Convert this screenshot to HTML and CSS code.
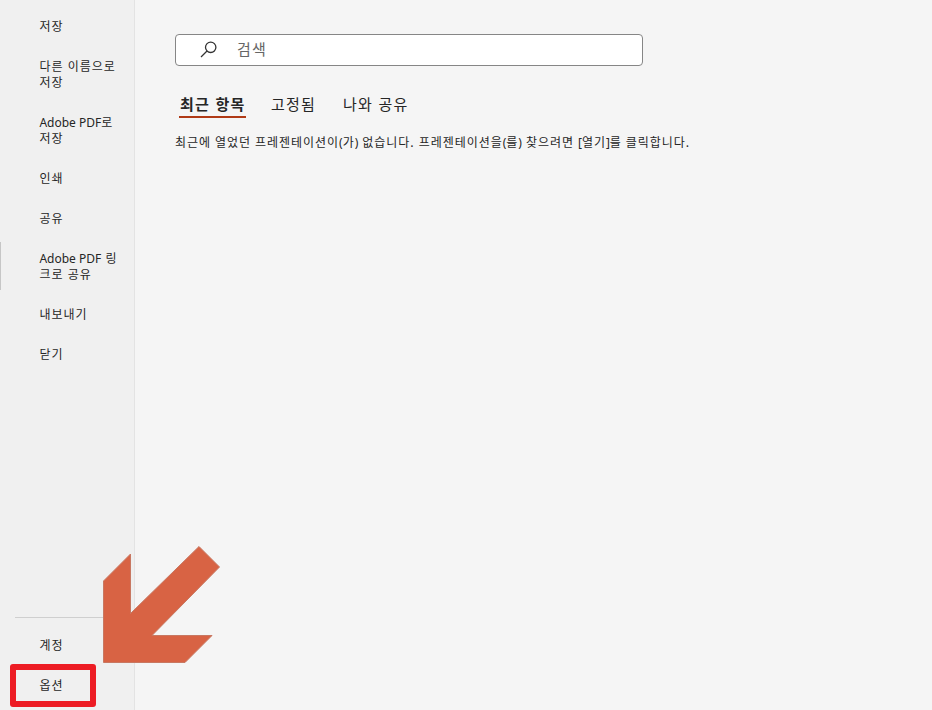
FILE: index.html
```
<!DOCTYPE html>
<html lang="ko">
<head>
    <meta charset="UTF-8">
    <meta name="viewport" content="width=device-width, initial-scale=1.0">
    <title>옵션</title>
    <link rel="stylesheet" href="styles.css">
</head>
<body>
    <div class="backstage">
        <nav class="sidebar">
            <ul class="menu">
                <li><a href="#">저장</a></li>
                <li><a href="#">다른 이름으로<br>저장</a></li>
                <li><a href="#"><span class="latin">Adobe PDF</span>로<br>저장</a></li>
                <li><a href="#">인쇄</a></li>
                <li><a href="#">공유</a></li>
                <li class="current"><a href="#"><span class="latin">Adobe PDF</span> 링<br>크로 공유</a></li>
                <li><a href="#">내보내기</a></li>
                <li><a href="#">닫기</a></li>
            </ul>
            <ul class="menu menu-bottom">
                <li><a href="#">계정</a></li>
                <li class="marked"><a href="#">옵션</a></li>
            </ul>
        </nav>

        <main class="content">
            <div class="search">
                <svg width="18" height="18" viewBox="0 0 18 18">
                    <circle cx="10.7" cy="6.3" r="5.2"></circle>
                    <path d="M7 10L1 16"></path>
                </svg>
                <span>검색</span>
            </div>
            <div class="tabs">
                <a class="tab active" href="#">최근 항목</a>
                <a class="tab" href="#">고정됨</a>
                <a class="tab" href="#">나와 공유</a>
            </div>
            <p class="empty">최근에 열었던 프레젠테이션이<span class="latin">(</span>가<span class="latin">)</span> 없습니다. 프레젠테이션을<span class="latin">(</span>를<span class="latin">)</span> 찾으려면 <span class="latin">[</span>열기<span class="latin">]</span>를 클릭합니다.</p>
        </main>

        <svg class="arrow" width="120" height="120" viewBox="0 0 120 120">
            <path d="M1.5 37L28.5 10V69.5L97 2.5L117.5 23L50 91.5H110L83 118.5H1.5Z"></path>
        </svg>
    </div>
</body>
</html>
```
FILE: styles.css
```
*,
*::before,
*::after {
    box-sizing: border-box;
}
body {
    margin: 0;
    background-color: #f5f5f5;
    color: #262626;
    font-family: "Noto Sans CJK KR", sans-serif;
    font-size: 12px;
    letter-spacing: 0.96px;
}
a {
    color: inherit;
    text-decoration: none;
}
.backstage {
    position: relative;
    display: flex;
    height: 710px;
    overflow: hidden;
}

.sidebar {
    display: flex;
    flex-direction: column;
    justify-content: space-between;
    width: 135px;
    padding: 6px 0 5px;
    background-color: #f0f0f0;
    border-right: 1px solid #e3e3e3;
}
.menu {
    margin: 0;
    padding: 0;
    list-style: none;
}
.menu li {
    position: relative;
    padding: 12px 0 12px 39px;
    line-height: 16px;
    white-space: nowrap;
}
.menu a {
    display: block;
    padding-left: 0.4px;
}
.latin {
    font-family: "Noto Sans", sans-serif;
    letter-spacing: 0;
    line-height: 1;
}
.menu .current::before {
    content: "";
    position: absolute;
    left: 0;
    top: 4px;
    width: 1px;
    height: 48px;
    background-color: #c6c6c6;
}
.menu-bottom::before {
    content: "";
    display: block;
    height: 1px;
    margin: 0 15px 7px;
    background-color: #cfcfcf;
}
.menu .marked::after {
    content: "";
    position: absolute;
    left: 10px;
    top: -1px;
    width: 86px;
    height: 43px;
    border: 6px solid #ed1c24;
    border-radius: 3px;
}

.content {
    flex: 1;
    padding: 34px 0 0 40px;
}
.search {
    display: flex;
    align-items: center;
    width: 468px;
    height: 32px;
    padding-left: 24px;
    background-color: #fff;
    border: 1px solid #868686;
    border-radius: 4px;
    color: #666;
    font-size: 15px;
    letter-spacing: 1.2px;
}
.search span {
    line-height: 20px;
    padding-bottom: 2px;
}
.search svg {
    margin-right: 19px;
    fill: none;
    stroke: #333;
    stroke-width: 1.3;
}
.tabs {
    display: flex;
    gap: 24px;
    padding: 26px 0 0 4px;
    font-size: 15px;
    letter-spacing: 1.2px;
    line-height: 24px;
}
.tab {
    height: 26px;
    padding: 0 2px 0 1px;
}
.tab.active {
    width: 67px;
    border-bottom: 2px solid #b03a16;
    font-weight: bold;
    white-space: nowrap;
}
.empty {
    margin: 16px 0 0;
    line-height: 16px;
    word-spacing: -0.3px;
    white-space: nowrap;
}

.arrow {
    position: absolute;
    left: 102px;
    top: 544px;
    fill: #d86344;
    stroke: #c87862;
    stroke-width: 1;
}
```
